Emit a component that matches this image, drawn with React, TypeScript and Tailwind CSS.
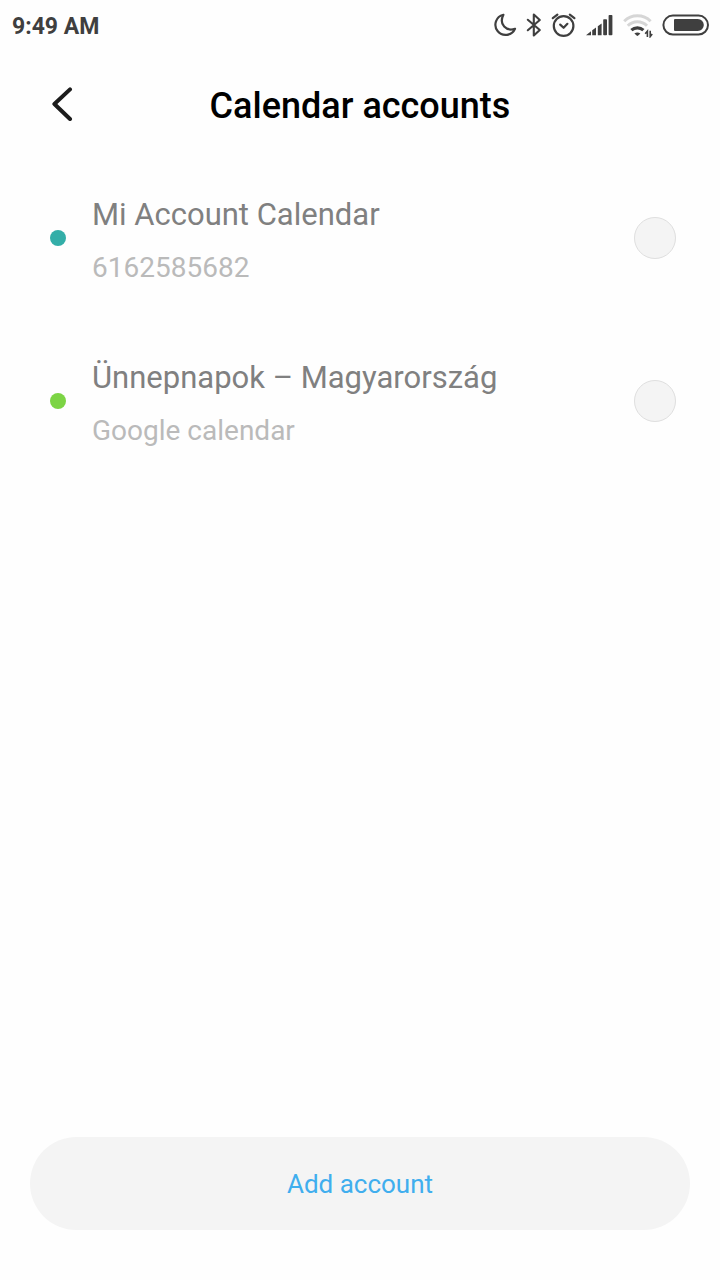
import type { ReactNode } from 'react';

const accounts = [
  { id: 'mi', name: 'Mi Account Calendar', detail: '6162585682', dot: 'bg-[#33aea8]' },
  { id: 'holidays', name: 'Ünnepnapok – Magyarország', detail: 'Google calendar', dot: 'bg-[#7cd444]' },
];

const MoonIcon = () => (
  <svg width="24" height="26" viewBox="0 0 24 26" fill="none" stroke="currentColor" strokeWidth="2.2" strokeLinejoin="round">
    <path d="M10.4 2.8A10.2 10.2 0 1 0 22 16.8C13.5 19.6 5.5 12.5 10.4 2.8Z" />
  </svg>
);

const BluetoothIcon = () => (
  <svg width="16" height="26" viewBox="0 0 16 26" fill="none" stroke="currentColor" strokeWidth="2.1" strokeLinecap="round" strokeLinejoin="round">
    <path d="M1.8 7.8 13.8 18 7.8 23.5V2.5L13.8 8 1.8 18.2" />
  </svg>
);

const AlarmIcon = () => (
  <svg width="26" height="26" viewBox="0 0 26 26" fill="none" stroke="currentColor" strokeWidth="2.2" strokeLinecap="round" strokeLinejoin="round">
    <circle cx="12.6" cy="14" r="9.8" />
    <path d="M9.2 12.6 12.6 15.8 16.4 11.8" />
    <path d="M1.8 6.2 6.4 2.6M23.4 6.2 18.8 2.6" />
  </svg>
);

const SignalIcon = () => (
  <svg width="28" height="26" viewBox="0 0 28 26" fill="currentColor">
    <path d="M0 23.2 5 19.2V23.2H0Z" />
    <path d="M6.2 18.2 10 15.6V23.2H6.2Z" />
    <path d="M11.8 14.2 15.6 11.4V23.2H11.8Z" />
    <rect x="17.2" y="7.2" width="3.8" height="16" rx="0.8" />
    <rect x="22.6" y="3" width="3.8" height="20.2" rx="0.8" />
  </svg>
);

const WifiIcon = () => (
  <svg width="30" height="26" viewBox="0 0 30 26" fill="none" strokeWidth="3">
    <path d="M1.2 9.2A18.8 18.8 0 0 1 27.6 9.2" stroke="#d6d6d6" />
    <path d="M4.8 13.8A13.4 13.4 0 0 1 24 13.8" stroke="#d6d6d6" />
    <path d="M8.4 18.2A8.8 8.8 0 0 1 20.4 18.2" stroke="currentColor" strokeWidth="3.2" />
    <path d="M11.4 21.4Q14.4 19.4 17.4 21.4L15.2 23.6Q14.4 24.2 13.6 23.6Z" fill="currentColor" />
    <path d="M24.4 25V19.2L22.2 21.8M27.2 18.8V24.6L29.2 22" stroke="currentColor" strokeWidth="1.6" />
  </svg>
);

const BatteryIcon = () => (
  <svg width="48" height="26" viewBox="0 0 48 26" fill="none">
    <rect x="1.4" y="3.6" width="44.6" height="19" rx="9.5" stroke="currentColor" strokeWidth="2" />
    <path d="M13 7H35.8A6 6 0 0 1 35.8 19H13A1 1 0 0 1 12 18V8A1 1 0 0 1 13 7Z" fill="currentColor" />
  </svg>
);

const StatusBar = () => (
  <div className="flex h-[50px] items-center justify-between pr-[10px] pl-3 text-[#3f3f3f]">
    <span className="pt-1 text-[23px] leading-[28px] font-bold">9:49 AM</span>
    <div className="flex items-center gap-[9px]">
      <MoonIcon />
      <BluetoothIcon />
      <AlarmIcon />
      <SignalIcon />
      <WifiIcon />
      <BatteryIcon />
    </div>
  </div>
);

const Header = ({ children }: { children: ReactNode }) => (
  <header className="grid h-[106px] grid-cols-[60px_1fr_60px] items-center px-8">
    <button type="button" aria-label="Back" className="flex h-[60px] w-[60px] items-center justify-center text-[#1c1c1c]">
      <svg width="24" height="36" viewBox="0 0 24 36" fill="none" stroke="currentColor" strokeWidth="4" strokeLinecap="round" strokeLinejoin="round">
        <path d="M20 4.4 4.4 19 20 34" />
      </svg>
    </button>
    <h1 className="pt-[6px] text-center text-[36px] leading-[44px] font-medium text-black">{children}</h1>
  </header>
);

export default function App() {
  return (
    <div className="flex min-h-screen flex-col bg-[#fefefe] font-[Roboto,sans-serif]">
      <StatusBar />
      <Header>Calendar accounts</Header>

      <main className="flex-1">
        {accounts.map((account) => (
          <label key={account.id} htmlFor={account.id} className="flex h-[163px] items-center pr-11 pl-[50px]">
            <span className={`size-4 shrink-0 rounded-full ${account.dot}`} />
            <span className="ml-[26px] flex flex-1 flex-col gap-[15px] pt-[7px]">
              <span className="text-[31px] leading-[38px] text-[#808080]">{account.name}</span>
              <span className="text-[28px] leading-[38px] text-[#bababa]">{account.detail}</span>
            </span>
            <input
              id={account.id}
              type="checkbox"
              className="size-[42px] shrink-0 appearance-none rounded-full border border-[#dfdfdf] bg-[#f4f4f4] checked:bg-[#37aef0]"
            />
          </label>
        ))}
      </main>

      <footer className="px-[30px] pb-[50px]">
        <button type="button" className="h-[93px] w-full rounded-full bg-[#f4f4f4] text-[26px] leading-[32px] text-[#40aeee]">
          Add account
        </button>
      </footer>
    </div>
  );
}
